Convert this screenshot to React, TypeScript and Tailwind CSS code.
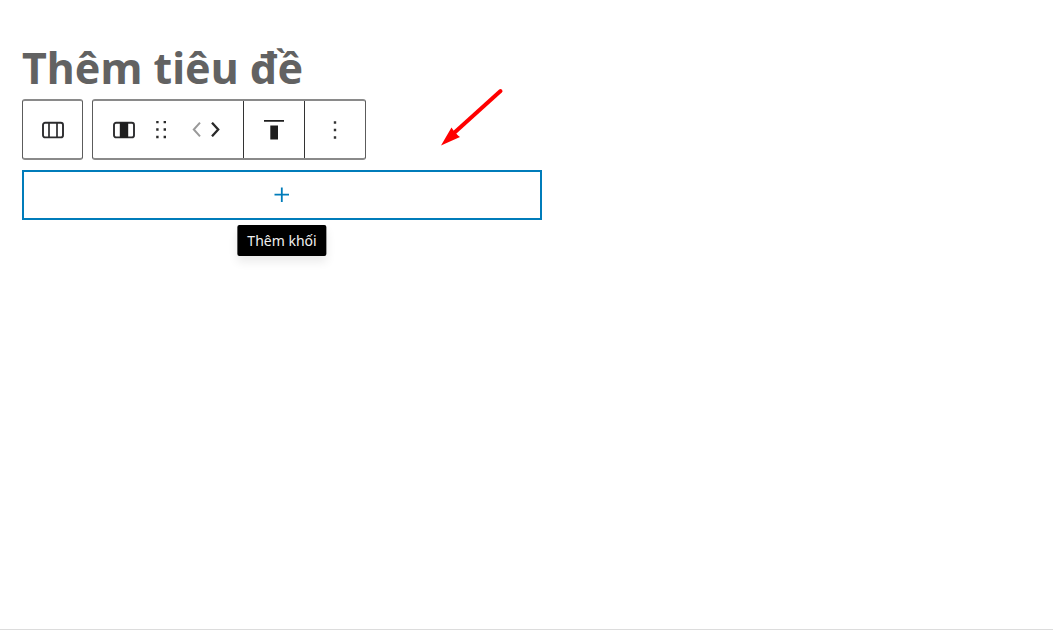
import type { ReactNode } from "react";

type ToolButtonProps = {
  label: string;
  className: string;
  disabled?: boolean;
  children: ReactNode;
};

function ToolButton({ label, className, disabled, children }: ToolButtonProps) {
  return (
    <button
      type="button"
      aria-label={label}
      disabled={disabled}
      className={`flex h-full items-center justify-center ${className}`}
    >
      {children}
    </button>
  );
}

function ColumnsIcon() {
  return (
    <svg width="22" height="18" viewBox="0 0 22 18" fill="none" stroke="#2c2c2e">
      <rect x="1" y="1.8" width="20" height="14.6" rx="2.2" strokeWidth="1.9" />
      <path d="M7 2v14M15 2v14" strokeWidth="1.7" />
    </svg>
  );
}

function ColumnIcon() {
  return (
    <svg width="22" height="18" viewBox="0 0 22 18" fill="none" stroke="#2c2c2e">
      <rect x="1" y="1.8" width="20" height="14.6" rx="2.2" strokeWidth="1.9" />
      <rect x="6.8" y="1.4" width="8.4" height="15.4" fill="#1e1e1e" stroke="none" />
    </svg>
  );
}

function DragIcon() {
  return (
    <svg width="12" height="20" viewBox="0 0 12 20" fill="#2a2a2a">
      <path d="M1.2.9h2.4v2.4H1.2zM8.6.9H11v2.4H8.6zM1.2 8.3h2.4v2.4H1.2zM8.6 8.3H11v2.4H8.6zM1.2 15.8h2.4v2.4H1.2zM8.6 15.8H11v2.4H8.6z" />
    </svg>
  );
}

function AlignTopIcon() {
  return (
    <svg width="20" height="20" viewBox="0 0 20 20" fill="#1e1e1e">
      <path d="M0 0h20v1.8H0zM6.3 5.4h7.7v14H6.3z" />
    </svg>
  );
}

function MoreIcon() {
  return (
    <svg width="4" height="20" viewBox="0 0 4 20" fill="#333">
      <path d="M.8 1.3h2.4v2.4H.8zM.8 8.8h2.4v2.4H.8zM.8 16.3h2.4v2.4H.8z" />
    </svg>
  );
}

const panel = "flex h-[61px] rounded-[3px] border border-y-2 border-x-[#5c5c5c] border-y-[#8a8a8a] bg-white";

export default function App() {
  return (
    <main className="flex min-h-screen flex-col items-start border-b border-[#dcdcdc] bg-white px-[22px] pt-[38px] font-['Noto_Sans',sans-serif]">
      <h1 className="h-[61px] text-[43px] leading-[60px] font-bold whitespace-nowrap text-[#626262]">
        Thêm tiêu đề
      </h1>

      <div className="relative flex gap-[9px]" role="toolbar" aria-label="Công cụ khối">
        <div className={panel}>
          <ToolButton label="Chọn khối cha: Cột" className="w-[59px]">
            <ColumnsIcon />
          </ToolButton>
        </div>
        <div className={panel}>
          <ToolButton label="Cột" className="w-[62px]">
            <ColumnIcon />
          </ToolButton>
          <ToolButton label="Kéo" className="w-3">
            <DragIcon />
          </ToolButton>
          <div className="flex pr-[18px] pl-[22px]">
            <ToolButton label="Di chuyển sang trái" className="w-4" disabled>
              <svg width="10" height="15" viewBox="0 0 10 15" fill="none" stroke="#999" strokeWidth="2">
                <path d="M8 .7L1.8 7.5L8 14.3" />
              </svg>
            </ToolButton>
            <ToolButton label="Di chuyển sang phải" className="w-5">
              <svg width="10" height="15" viewBox="0 0 10 15" fill="none" stroke="#2a2a2a" strokeWidth="2.3">
                <path d="M2 .7L8.2 7.5L2 14.3" />
              </svg>
            </ToolButton>
          </div>
          <ToolButton label="Căn chỉnh dọc" className="w-[61px] border-l border-[#333]">
            <AlignTopIcon />
          </ToolButton>
          <ToolButton label="Tùy chọn" className="w-[61px] border-l border-[#333]">
            <MoreIcon />
          </ToolButton>
        </div>
        <svg
          className="pointer-events-none absolute -top-[11px] left-[418px]"
          width="64"
          height="60"
          viewBox="0 0 64 60"
          aria-hidden="true"
        >
          <path d="M60.5 3L14 45" stroke="#f00" strokeWidth="4" strokeLinecap="round" />
          <path d="M1 57.5L11.5 39.5L13.5 42.5L18 47.5L20 49z" fill="#f00" />
        </svg>
      </div>

      <section className="relative mt-[10px] w-full max-w-[520px]">
        <button
          type="button"
          aria-label="Thêm khối"
          aria-describedby="add-tip"
          className="flex h-[50px] w-full items-center justify-center border-2 border-[#007cba]"
        >
          <svg width="16" height="16" viewBox="0 0 16 16" stroke="#007cba" strokeWidth="1.8">
            <path d="M7.8 .5v14.5M.5 7.7h14.5" />
          </svg>
        </button>
        <span
          id="add-tip"
          role="tooltip"
          className="absolute top-[55px] left-1/2 flex h-[31px] -translate-x-1/2 items-center rounded-[2px] bg-black px-[10px] text-[14px] leading-5 whitespace-nowrap text-[#f0f0f0] shadow-[0_6px_10px_rgba(0,0,0,0.08)]"
        >
          Thêm khối
        </span>
      </section>
    </main>
  );
}
